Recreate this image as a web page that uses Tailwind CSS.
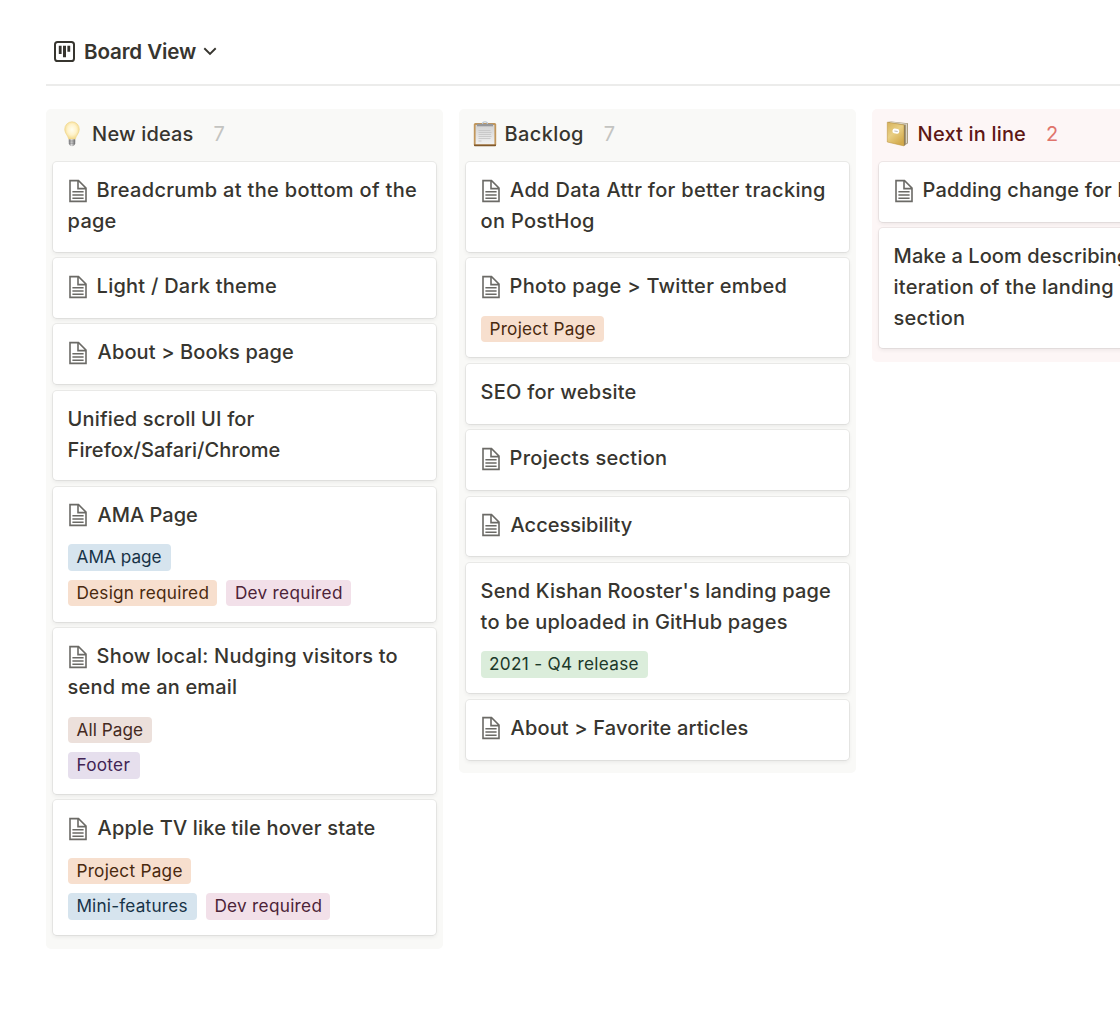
<!DOCTYPE html>
<html lang="en">
<head>
<meta charset="utf-8">
<title>Board View</title>
<script src="https://cdn.jsdelivr.net/npm/@tailwindcss/browser@4"></script>
</head>
<body class="h-[1020px] w-[1120px] overflow-hidden bg-white font-['Inter',sans-serif] text-[#37352f] whitespace-nowrap">
<svg class="hidden">
  <symbol id="doc" viewBox="0 0 30 30"><path d="M16,1H4v28h22V11L16,1z M16,3.828L23.172,11H16V3.828z M24,27H6V3h8v10h10V27z M8,17h14v-2H8V17z M8,21h14v-2H8V21z M8,25h14v-2H8V25z"/></symbol>
</svg>
<div class="ml-[45.600px] overflow-hidden">
  <header class="flex h-[86px] items-center border-b-2 border-[#ececeb] pt-[19px] pb-[1px] pl-2">
    <svg class="size-[21px]" viewBox="0 0 21 21" fill="none"><rect x="1" y="1" width="19" height="19" rx="2.6" stroke="#37352f" stroke-width="2"/><path d="M4.800 4.800h2.800v8.200H4.800zM9 4.800h3v11.500H9zM13.400 4.800h2.800v6h-2.800z" fill="#37352f"/></svg>
    <span class="ml-[9.400px] text-[20.6px] leading-[31px] font-semibold tracking-[-0.127px]">Board View</span>
    <svg class="ml-[6.500px] h-[10px] w-[14px]" viewBox="0 0 14 10" fill="none"><path d="M1.300 2.300L7 7.900L12.700 2.300" stroke="#37352f" stroke-width="1.900"/></svg>
  </header>

  <main class="mt-[23px] flex items-start gap-[15.5px] pb-4">
    <section class="w-[397.5px] shrink-0 rounded-[5px] bg-[#f9f9f7] px-[7px] pb-[13.5px]">
      <div class="flex h-[53px] items-center pb-[3px] pl-[9px] text-xl font-medium">
        <svg class="h-[26px] w-[20px]" viewBox="0 0 20 26"><defs><radialGradient id="glow" cx=".5" cy=".45" r=".55"><stop offset="0" stop-color="#fffef0"/><stop offset=".55" stop-color="#fff3cb"/><stop offset="1" stop-color="#f3d98a"/></radialGradient><linearGradient id="cap"><stop offset="0" stop-color="#77777a"/><stop offset=".45" stop-color="#dcdcdc"/><stop offset="1" stop-color="#68686a"/></linearGradient></defs><path d="M10 .8a7.300 7.300 0 0 0-7.300 7.400c0 4.300 3.300 6.200 4 10h6.600c.7-3.800 4-5.700 4-10A7.300 7.300 0 0 0 10 .8z" fill="url(#glow)" stroke="#eed384" stroke-width=".6"/><path d="M6.800 18.200h6.400v4.500c-.6 1.400-1.700 2.500-3.200 2.500s-2.600-1.100-3.200-2.500z" fill="url(#cap)"/><path d="M6.800 20h6.400M7 22.200h6" stroke="#777" stroke-width=".6"/></svg>
        <span class="ml-[10.500px] tracking-[0.167px]">New ideas</span>
        <span class="ml-5 font-normal text-[#c4c4c1]">7</span>
      </div>
      <div class="flex flex-col gap-[6.600px]">
        <article class="h-[89.500px] rounded-[4px] bg-white px-[15px] pt-[13px] text-xl leading-[31px] font-medium shadow-[0_0_0_1px_rgba(15,15,15,0.06),0_2px_4px_rgba(15,15,15,0.07)]">
          <div class="flex items-center tracking-[0.327px]"><svg class="-ml-[2px] mr-[7px] size-6 fill-[#6b6a66]"><use href="#doc"/></svg>Breadcrumb at the bottom of the</div>
          <div class="tracking-[0.230px]">page</div>
        </article>
        <article class="h-[59.700px] rounded-[4px] bg-white px-[15px] pt-[13px] text-xl leading-[31px] font-medium shadow-[0_0_0_1px_rgba(15,15,15,0.06),0_2px_4px_rgba(15,15,15,0.07)]">
          <div class="flex items-center tracking-[0.244px]"><svg class="-ml-[2px] mr-[7px] size-6 fill-[#6b6a66]"><use href="#doc"/></svg>Light / Dark theme</div>
        </article>
        <article class="h-[59.700px] rounded-[4px] bg-white px-[15px] pt-[13px] text-xl leading-[31px] font-medium shadow-[0_0_0_1px_rgba(15,15,15,0.06),0_2px_4px_rgba(15,15,15,0.07)]">
          <div class="flex items-center tracking-[0.126px]"><svg class="-ml-[2px] mr-[8px] size-6 fill-[#6b6a66]"><use href="#doc"/></svg>About &gt; Books page</div>
        </article>
        <article class="h-[89.300px] rounded-[4px] bg-white px-[15px] pt-[13px] text-xl leading-[31px] font-medium shadow-[0_0_0_1px_rgba(15,15,15,0.06),0_2px_4px_rgba(15,15,15,0.07)]">
          <div class="tracking-[0.156px]">Unified scroll UI for</div>
          <div class="tracking-[0.032px]">Firefox/Safari/Chrome</div>
        </article>
        <article class="h-[135px] rounded-[4px] bg-white px-[15px] pt-[13px] text-xl leading-[31px] font-medium shadow-[0_0_0_1px_rgba(15,15,15,0.06),0_2px_4px_rgba(15,15,15,0.07)]">
          <div class="flex items-center tracking-[0.009px]"><svg class="-ml-[2px] mr-[8px] size-6 fill-[#6b6a66]"><use href="#doc"/></svg>AMA Page</div>
          <div class="mt-[13.500px] flex flex-col gap-[9px] text-[17.200px] leading-[26.500px] font-normal">
            <div class="flex gap-[9px]"><span class="w-[103px] rounded-[4px] bg-[#d6e4ee] pl-[9px] tracking-[0.006px] text-[#183347]">AMA page</span></div>
            <div class="flex gap-[9px]"><span class="w-[149.500px] rounded-[4px] bg-[#f7dfce] pl-[8.800px] tracking-[0.254px] text-[#49290e]">Design required</span><span class="w-[124.500px] rounded-[4px] bg-[#f2e0e9] pl-[8.800px] tracking-[0.287px] text-[#4c2337]">Dev required</span></div>
          </div>
        </article>
        <article class="h-[165.600px] rounded-[4px] bg-white px-[15px] pt-[13px] text-xl leading-[31px] font-medium shadow-[0_0_0_1px_rgba(15,15,15,0.06),0_2px_4px_rgba(15,15,15,0.07)]">
          <div class="flex items-center tracking-[0.185px]"><svg class="-ml-[2px] mr-[7px] size-6 fill-[#6b6a66]"><use href="#doc"/></svg>Show local: Nudging visitors to</div>
          <div class="tracking-[0.185px]">send me an email</div>
          <div class="mt-[13.500px] flex flex-col gap-[9px] text-[17.200px] leading-[26.500px] font-normal">
            <div class="flex gap-[9px]"><span class="w-[84.500px] rounded-[4px] bg-[#ece0db] pl-[9px] tracking-[0.045px] text-[#442a1e]">All Page</span></div>
            <div class="flex gap-[9px]"><span class="w-[72px] rounded-[4px] bg-[#e6dfed] pl-[8.800px] tracking-[0.289px] text-[#412454]">Footer</span></div>
          </div>
        </article>
        <article class="h-[135px] rounded-[4px] bg-white px-[15px] pt-[13px] text-xl leading-[31px] font-medium shadow-[0_0_0_1px_rgba(15,15,15,0.06),0_2px_4px_rgba(15,15,15,0.07)]">
          <div class="flex items-center tracking-[0.181px]"><svg class="-ml-[2px] mr-[8px] size-6 fill-[#6b6a66]"><use href="#doc"/></svg>Apple TV like tile hover state</div>
          <div class="mt-[13.500px] flex flex-col gap-[9px] text-[17.200px] leading-[26.500px] font-normal">
            <div class="flex gap-[9px]"><span class="w-[123px] rounded-[4px] bg-[#f7dfce] pl-[8.800px] tracking-[0.264px] text-[#49290e]">Project Page</span></div>
            <div class="flex gap-[9px]"><span class="w-[129px] rounded-[4px] bg-[#d6e4ee] pl-[8.800px] tracking-[0.200px] text-[#183347]">Mini-features</span><span class="w-[124.500px] rounded-[4px] bg-[#f2e0e9] pl-[8.800px] tracking-[0.287px] text-[#4c2337]">Dev required</span></div>
          </div>
        </article>
      </div>
    </section>

    <section class="w-[397.5px] shrink-0 rounded-[5px] bg-[#f9f9f7] px-[7px] pb-[13.5px]">
      <div class="flex h-[53px] items-center pb-[3px] pl-[7px] text-xl font-medium">
        <svg class="h-[26px] w-6" viewBox="0 0 24 26"><defs><linearGradient id="sheet" x2="0" y2="1"><stop offset="0" stop-color="#d3d3d3"/><stop offset="1" stop-color="#f1f1f1"/></linearGradient></defs><rect x=".8" y="2" width="22.400" height="23" rx="1.500" fill="#c2975c"/><path d="M1 23.500h22v.9a.8.8 0 0 1-.8.8H1.800a.8.8 0 0 1-.8-.8z" fill="#80592b"/><rect x="2.600" y="4" width="18.800" height="19.200" fill="url(#sheet)"/><path d="M5.500 9.500h12M5.500 11.500h13M5.500 13.500h12.500M5.500 15.500h13M5.500 17.500h12M5.500 20h3" stroke="#c6c6c6" stroke-width=".9"/><path d="M4 2.800h16v2.500H4z" fill="#96979a"/><path d="M9.500 3c0-3 5-3 5 0" fill="none" stroke="#b7c4d2" stroke-width="1.200"/></svg>
        <span class="ml-[8px] tracking-[0.361px]">Backlog</span>
        <span class="ml-5 font-normal text-[#c4c4c1]">7</span>
      </div>
      <div class="flex flex-col gap-[6.600px]">
        <article class="h-[89.500px] rounded-[4px] bg-white px-[15px] pt-[13px] text-xl leading-[31px] font-medium shadow-[0_0_0_1px_rgba(15,15,15,0.06),0_2px_4px_rgba(15,15,15,0.07)]">
          <div class="flex items-center tracking-[0.315px]"><svg class="-ml-[2px] mr-[7.500px] size-6 fill-[#6b6a66]"><use href="#doc"/></svg>Add Data Attr for better tracking</div>
          <div class="tracking-[0.300px]">on PostHog</div>
        </article>
        <article class="h-[99.400px] rounded-[4px] bg-white px-[15px] pt-[13px] text-xl leading-[31px] font-medium shadow-[0_0_0_1px_rgba(15,15,15,0.06),0_2px_4px_rgba(15,15,15,0.07)]">
          <div class="flex items-center tracking-[0.289px]"><svg class="-ml-[2px] mr-[7px] size-6 fill-[#6b6a66]"><use href="#doc"/></svg>Photo page &gt; Twitter embed</div>
          <div class="mt-[13.500px] flex text-[17.200px] leading-[26.500px] font-normal"><span class="w-[123px] rounded-[4px] bg-[#f7dfce] pl-[8.800px] tracking-[0.264px] text-[#49290e]">Project Page</span></div>
        </article>
        <article class="h-[59.700px] rounded-[4px] bg-white px-[15px] pt-[13px] text-xl leading-[31px] font-medium shadow-[0_0_0_1px_rgba(15,15,15,0.06),0_2px_4px_rgba(15,15,15,0.07)]">
          <div class="tracking-[0.241px]">SEO for website</div>
        </article>
        <article class="h-[59.700px] rounded-[4px] bg-white px-[15px] pt-[13px] text-xl leading-[31px] font-medium shadow-[0_0_0_1px_rgba(15,15,15,0.06),0_2px_4px_rgba(15,15,15,0.07)]">
          <div class="flex items-center tracking-[0.279px]"><svg class="-ml-[2px] mr-[7px] size-6 fill-[#6b6a66]"><use href="#doc"/></svg>Projects section</div>
        </article>
        <article class="h-[59.700px] rounded-[4px] bg-white px-[15px] pt-[13px] text-xl leading-[31px] font-medium shadow-[0_0_0_1px_rgba(15,15,15,0.06),0_2px_4px_rgba(15,15,15,0.07)]">
          <div class="flex items-center"><svg class="-ml-[2px] mr-[8px] size-6 fill-[#6b6a66]"><use href="#doc"/></svg>Accessibility</div>
        </article>
        <article class="h-[130.300px] rounded-[4px] bg-white px-[15px] pt-[13px] text-xl leading-[31px] font-medium shadow-[0_0_0_1px_rgba(15,15,15,0.06),0_2px_4px_rgba(15,15,15,0.07)]">
          <div class="tracking-[0.170px]">Send Kishan Rooster's landing page</div>
          <div class="tracking-[0.200px]">to be uploaded in GitHub pages</div>
          <div class="mt-[13.500px] flex text-[17.200px] leading-[26.500px] font-normal"><span class="w-[167.500px] rounded-[4px] bg-[#dbeddb] pl-[8.500px] tracking-[0.298px] text-[#1c3829]">2021 - Q4 release</span></div>
        </article>
        <article class="h-[59.700px] rounded-[4px] bg-white px-[15px] pt-[13px] text-xl leading-[31px] font-medium shadow-[0_0_0_1px_rgba(15,15,15,0.06),0_2px_4px_rgba(15,15,15,0.07)]">
          <div class="flex items-center tracking-[0.150px]"><svg class="-ml-[2px] mr-[8px] size-6 fill-[#6b6a66]"><use href="#doc"/></svg>About &gt; Favorite articles</div>
        </article>
      </div>
    </section>

    <section class="w-[397.5px] shrink-0 rounded-[5px] bg-[#fdf6f6] px-[7px] pb-[13.5px]">
      <div class="flex h-[53px] items-center pb-[3px] pl-[7px] text-xl font-medium text-[#5d1715]">
        <svg class="h-[26px] w-6" viewBox="0 0 24 26"><defs><linearGradient id="cover" x2=".6" y2="1"><stop offset="0" stop-color="#d6b25c"/><stop offset=".5" stop-color="#e9cf84"/><stop offset="1" stop-color="#d3aa4c"/></linearGradient></defs><path d="M1.500 1L5 .5l17 1.800v20L18.500 24.500z" fill="#a59678"/><path d="M4 1.200l16.500 2v19" fill="none" stroke="#d9d4c6" stroke-width="1.200"/><path d="M1.300 1.200L18 4v20.900L1.300 21z" fill="url(#cover)" stroke="#bf9847" stroke-width=".6"/><path d="M18.600 4.300v20.300" stroke="#85754f" stroke-width=".8"/><rect x="6.500" y="7.800" width="6.800" height="4.800" rx="2" fill="#fff" transform="rotate(8 10 10)"/><path d="M8.400 10l3.300.5" stroke="#aaa" stroke-width=".8"/></svg>
        <span class="ml-[8px] tracking-[0.174px]">Next in line</span>
        <span class="ml-5 font-normal text-[#e0746c]">2</span>
      </div>
      <div class="flex flex-col gap-[6.600px]">
        <article class="h-[59.700px] rounded-[4px] bg-white px-[15px] pt-[13px] text-xl leading-[31px] font-medium shadow-[0_0_0_1px_rgba(15,15,15,0.06),0_2px_4px_rgba(15,15,15,0.07)]">
          <div class="flex items-center tracking-[0.136px]"><svg class="-ml-[2px] mr-[7px] size-6 shrink-0 fill-[#6b6a66]"><use href="#doc"/></svg>Padding change for landing</div>
        </article>
        <article class="h-[120.200px] rounded-[4px] bg-white px-[15px] pt-[13px] text-xl leading-[31px] font-medium shadow-[0_0_0_1px_rgba(15,15,15,0.06),0_2px_4px_rgba(15,15,15,0.07)]">
          <div class="tracking-[0.080px]">Make a Loom describing the</div>
          <div class="tracking-[0.220px]">iteration of the landing page</div>
          <div class="tracking-[0.252px]">section</div>
        </article>
      </div>
    </section>
  </main>
</div>
</body>
</html>
